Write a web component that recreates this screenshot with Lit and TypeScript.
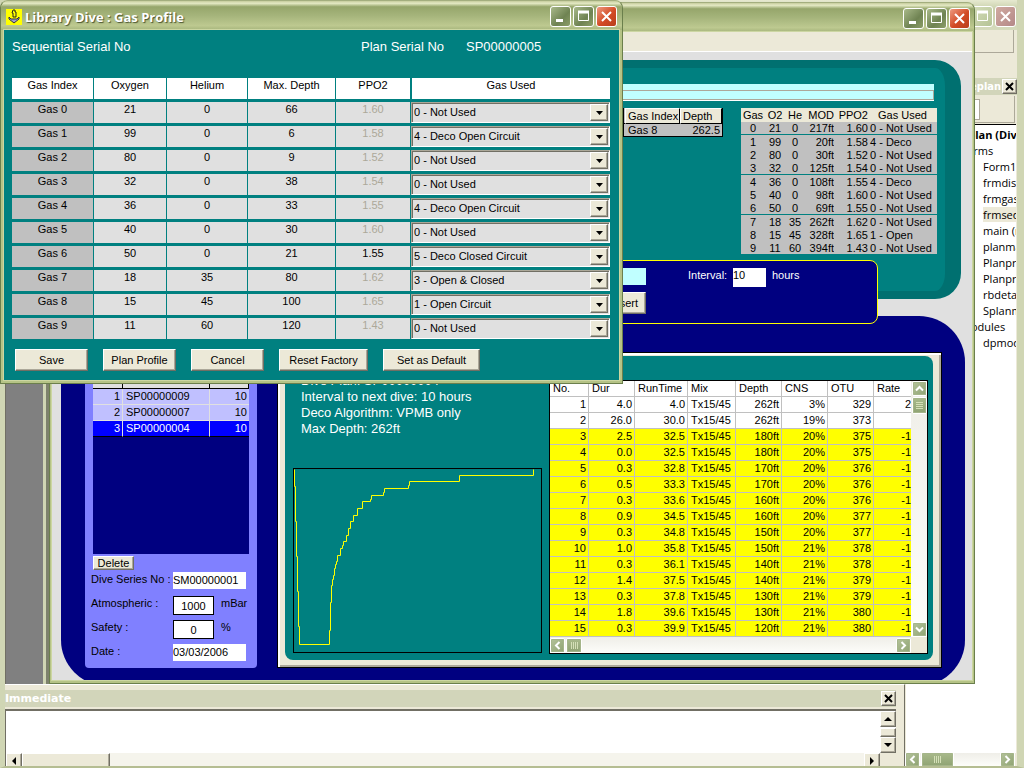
import { LitElement, html, css, svg } from "lit";
import { customElement, property } from "lit/decorators.js";

const USAGE = [
  "0 - Not Used",
  "1 - Open Circuit",
  "2 - Closed Circuit",
  "3 - Open & Closed",
  "4 - Deco Open Circuit",
  "5 - Deco Closed Circuit",
];

// oxygen, helium, max. depth, PPO2, usage index
const GASES: [number, number, number, string, number][] = [
  [21, 0, 66, "1.60", 0],
  [99, 0, 6, "1.58", 4],
  [80, 0, 9, "1.52", 0],
  [32, 0, 38, "1.54", 0],
  [36, 0, 33, "1.55", 4],
  [40, 0, 30, "1.60", 0],
  [50, 0, 21, "1.55", 5],
  [18, 35, 80, "1.62", 3],
  [15, 45, 100, "1.65", 1],
  [11, 60, 120, "1.43", 0],
];

const SUMMARY = [
  ["0", "21", "0", "217ft", "1.60", "0 - Not Used"],
  ["1", "99", "0", "20ft", "1.58", "4 - Deco"],
  ["2", "80", "0", "30ft", "1.52", "0 - Not Used"],
  ["3", "32", "0", "125ft", "1.54", "0 - Not Used"],
  ["4", "36", "0", "108ft", "1.55", "4 - Deco"],
  ["5", "40", "0", "98ft", "1.60", "0 - Not Used"],
  ["6", "50", "0", "69ft", "1.55", "0 - Not Used"],
  ["7", "18", "35", "262ft", "1.62", "0 - Not Used"],
  ["8", "15", "45", "328ft", "1.65", "1 - Open"],
  ["9", "11", "60", "394ft", "1.43", "0 - Not Used"],
];

const STEPS = [
  ["4.0", "4.0", "262ft", "3%", "329", "2"],
  ["26.0", "30.0", "262ft", "19%", "373", ""],
  ["2.5", "32.5", "180ft", "20%", "375", "-1"],
  ["0.0", "32.5", "180ft", "20%", "375", "-1"],
  ["0.3", "32.8", "170ft", "20%", "376", "-1"],
  ["0.5", "33.3", "170ft", "20%", "376", "-1"],
  ["0.3", "33.6", "160ft", "20%", "376", "-1"],
  ["0.9", "34.5", "160ft", "20%", "377", "-1"],
  ["0.3", "34.8", "150ft", "20%", "377", "-1"],
  ["1.0", "35.8", "150ft", "21%", "378", "-1"],
  ["0.3", "36.1", "140ft", "21%", "378", "-1"],
  ["1.4", "37.5", "140ft", "21%", "379", "-1"],
  ["0.3", "37.8", "130ft", "21%", "379", "-1"],
  ["1.8", "39.6", "130ft", "21%", "380", "-1"],
  ["0.3", "39.9", "120ft", "21%", "380", "-1"],
];

const FORMS = ["Form1", "frmdisp", "frmgas", "frmseq", "main (r", "planma", "Planpro", "Planpro", "rbdeta", "Splanm"];

const base = css`
  * {
    box-sizing: border-box;
  }
  button,
  input,
  select {
    font: inherit;
    color: inherit;
    margin: 0;
    padding: 0;
    border: 0;
    border-radius: 0;
    outline: none;
  }
  table {
    border-spacing: 0;
    table-layout: fixed;
  }
  th,
  td {
    padding: 0;
    font-weight: normal;
    text-align: center;
    white-space: nowrap;
    overflow: hidden;
  }
  .push {
    background: #ece9d8;
    color: #000;
    border: 1px solid;
    border-color: #fff #716f64 #716f64 #fff;
    box-shadow: inset -1px -1px 0 #aca899;
  }
`;

@customElement("window-controls")
export class WindowControls extends LitElement {
  @property({ type: Boolean }) faded = false;

  static styles = css`
    :host {
      display: flex;
      gap: 2px;
    }
    button {
      width: 21px;
      height: 21px;
      padding: 0;
      border: 1px solid #fff;
      border-radius: 3px;
      background: linear-gradient(135deg, #a9b98a, #6f8352 60%, #8c9e68);
      display: grid;
      place-items: center;
    }
    .close {
      background: linear-gradient(135deg, #ee9a80, #d24a24 55%, #b8401c);
    }
    .faded button {
      background: linear-gradient(135deg, #d3dcb8, #b5c396);
    }
    .faded .close {
      background: linear-gradient(135deg, #d0aaa0, #b48888);
    }
    .row {
      display: flex;
      gap: 2px;
    }
  `;

  render() {
    return html`<div class="row ${this.faded ? "faded" : ""}">
      <button aria-label="Minimize">
        <svg width="17" height="17"><path d="M4 12.500h7" stroke="#fff" stroke-width="3" /></svg>
      </button>
      <button aria-label="Maximize">
        <svg width="17" height="17" fill="none" stroke="#fff"><path d="M3.500 4.500h10v8h-10z" /><path d="M3 4h11" stroke-width="3" /></svg>
      </button>
      <button class="close" aria-label="Close">
        <svg width="17" height="17"><path d="M4 4l9 9M13 4l-9 9" stroke="#fff" stroke-width="2" /></svg>
      </button>
    </div>`;
  }
}

@customElement("scroll-strip")
export class ScrollStrip extends LitElement {
  @property() direction = "horizontal";

  static styles = css`
    :host {
      display: block;
      background: linear-gradient(#efeee8, #fdfdfa);
    }
    .strip {
      display: flex;
      height: 100%;
      gap: 1px;
      align-items: center;
    }
    .vertical {
      flex-direction: column;
    }
    button {
      width: 15px;
      height: 15px;
      padding: 0;
      flex: none;
      border: 1px solid #fff;
      outline: 1px solid #a5b58a;
      outline-offset: -2px;
      border-radius: 2px;
      background: linear-gradient(135deg, #b4c39a, #8fa373);
      display: grid;
      place-items: center;
    }
    .thumb {
      width: var(--thumb, 16px);
      background: linear-gradient(#a9ba8b, #8fa373);
    }
    .vertical .thumb {
      width: 15px;
      height: 17px;
    }
    .vertical .thumb svg {
      transform: rotate(90deg);
    }
    .gap {
      flex: 1;
    }
  `;

  render() {
    const v = this.direction === "vertical";
    const arrow = (d: string) => html`<svg width="11" height="11" fill="none" stroke="#fff" stroke-width="2"><path d=${d} /></svg>`;
    return html`<div class="strip ${this.direction}">
      <button aria-label="Back">${arrow(v ? "M2 7.500L5.500 4L9 7.500" : "M7.500 2L4 5.500L7.500 9")}</button>
      <button class="thumb" aria-label="Scroll">
        <svg width="9" height="9" stroke="#d5e0b8"><path d="M1.500 1v7M3.500 1v7M5.500 1v7M7.500 1v7" /></svg>
      </button>
      <span class="gap"></span>
      <button aria-label="Forward">${arrow(v ? "M2 3.500L5.500 7L9 3.500" : "M3.500 2L7 5.500L3.500 9")}</button>
    </div>`;
  }
}

@customElement("gas-dialog")
export class GasDialog extends LitElement {
  static styles = [
    base,
    css`
      :host {
        display: block;
        border: 1px solid #6b7f4c;
        border-top-color: #a3ae7e;
        border-radius: 8px 8px 0 0;
        background: #b5c386;
        overflow: hidden;
      }
      .title {
        display: flex;
        align-items: center;
        height: 29px;
        padding: 2px 5px 0 5px;
        background: linear-gradient(#c5cc9c 0, #e4e9c4 8%, #96a66b 20%, #a5b47b 50%, #bdc990 85%, #a5b47b 100%);
        color: #fff;
        text-shadow: 1px 1px 1px #4a5530;
      }
      .title h1 {
        flex: 1;
        margin: 0 0 0 3px;
        font: bold 13px "Open Sans", "Noto Sans", sans-serif;
      }
      .client {
        margin: 0 3px 3px;
        outline: 1px solid #ccd6a2;
        background: #008080;
        padding: 9px 9px 9px 8px;
      }
      .serials {
        display: grid;
        grid-template-columns: 349px 105px auto;
        line-height: 16px;
        font-size: 13px;
        color: #fff;
        margin-bottom: 20px;
      }
      table {
        border-spacing: 1px 3px;
        margin: 0 -1px;
      }
      th {
        height: 21px;
        background: #fff;
        line-height: 15px;
        vertical-align: top;
      }
      .last {
        border-left: 1px solid #008080;
      }
      td {
        height: 21px;
        background: #e0e0e0;
        line-height: 15px;
        vertical-align: top;
      }
      td.index {
        background: #c0c0c0;
      }
      td.dim {
        color: #aca899;
      }
      .combo {
        display: grid;
        grid-template-columns: 1fr 19px;
        height: 21px;
        border: 1px solid;
        border-color: #aca899 #fff #fff #aca899;
        box-shadow: inset 1px 1px 0 #716f64;
      }
      select {
        appearance: none;
        grid-area: 1 / 1 / 2 / 3;
        background: none;
        padding-left: 2px;
      }
      .arrow {
        grid-area: 1 / 2 / 2 / 3;
        pointer-events: none;
        margin: 1px 1px 1px 0;
        display: grid;
        place-items: center;
      }
      .actions {
        display: flex;
        gap: 15px;
        padding: 7px 3px 0;
      }
      .actions button {
        width: 73px;
        height: 22px;
      }
      .actions .wide {
        width: 89px;
      }
      .actions .wider {
        width: 97px;
      }
    `,
  ];

  render() {
    return html`
      <header class="title">
        <svg width="16" height="16">
          <rect width="16" height="16" fill="#ff0" />
          <path d="M7 1h2v2h1v5H7V4H6z" fill="#ff0" stroke="#222" />
          <path d="M3 8l2 2h6l2-2v2l-5 4-5-4z" fill="#a0a0c8" stroke="#334" />
        </svg>
        <h1>Library Dive : Gas Profile</h1>
        <window-controls></window-controls>
      </header>
      <div class="client">
        <div class="serials"><span>Sequential Serial No</span><span>Plan Serial No</span><span>SP00000005</span></div>
        <table>
          <colgroup>
            <col style="width:81px" /><col style="width:72px" /><col style="width:80px" />
            <col style="width:87px" /><col style="width:74px" /><col style="width:199px" />
          </colgroup>
          <thead>
            <tr><th>Gas Index</th><th>Oxygen</th><th>Helium</th><th>Max. Depth</th><th>PPO2</th><th class="last">Gas Used</th></tr>
          </thead>
          <tbody>
            ${GASES.map(
              ([o2, he, depth, ppo2, use], i) => html`<tr>
                <td class="index">Gas ${i}</td>
                <td>${o2}</td>
                <td>${he}</td>
                <td>${depth}</td>
                <td class=${use === 5 ? "" : "dim"}>${ppo2}</td>
                <td>
                  <div class="combo">
                    <select aria-label="Gas ${i} used">
                      ${USAGE.map((u, n) => html`<option ?selected=${n === use}>${u}</option>`)}
                    </select>
                    <span class="arrow push"><svg width="7" height="4"><path d="M0 0h7L3.500 4z" /></svg></span>
                  </div>
                </td>
              </tr>`
            )}
          </tbody>
        </table>
        <div class="actions">
          <button class="push">Save</button>
          <button class="push">Plan Profile</button>
          <button class="push">Cancel</button>
          <button class="push wide">Reset Factory</button>
          <button class="push wider">Set as Default</button>
        </div>
      </div>
    `;
  }
}

@customElement("planner-form")
export class PlannerForm extends LitElement {
  static styles = [
    base,
    css`
      :host {
        display: flex;
        flex-direction: column;
        border: 1px solid #6b7f4c;
        border-top-color: #a3ae7e;
        border-radius: 8px 8px 0 0;
        background: #b5c386;
        overflow: hidden;
        isolation: isolate;
      }
      .title {
        display: flex;
        flex: none;
        justify-content: flex-end;
        align-items: center;
        height: 29px;
        padding: 2px 4px 0;
        background: linear-gradient(#c5cc9c 0, #e4e9c4 8%, #96a66b 20%, #a5b47b 50%, #bdc990 85%, #a5b47b 100%);
      }
      .client {
        flex: 1;
        min-height: 0;
        margin: 0 2px 3px;
        outline: 1px solid #ccd6a2;
        background: #e0e0e0;
        overflow: hidden;
        display: flex;
        flex-direction: column;
      }
      .menu {
        flex: none;
        height: 20px;
        background: #ece9d8;
        border-bottom: 1px solid #fff;
      }
      .gases {
        flex: none;
        margin: 8px 11px 0 9px;
        border: 8px solid #007070;
        border-right-width: 16px;
        border-radius: 26px;
        background: #008080;
        padding: 16px 8px 37px;
      }
      .note {
        margin-right: 3px;
        padding: 6px 0 1px;
        background: #c0ffff;
        margin-bottom: 7px;
      }
      .note input {
        display: block;
        width: 100%;
        height: 10px;
        background: #c0ffff;
        border: 1px solid #aca899;
        box-shadow: 0 1px 0 #fff;
      }
      .tables {
        display: flex;
        justify-content: flex-end;
        align-items: flex-start;
        gap: 18px;
      }
      .mini {
        width: 100px;
        background: #c0c0c0;
        border-right: 1px solid #000;
        border-left: 1px solid #000;
      }
      .mini th {
        height: 16px;
        background: #ece9d8;
        border: 1px solid;
        border-color: #fff #000 #000 #fff;
        text-align: left;
        padding-left: 2px;
      }
      .mini td {
        height: 13px;
        border-bottom: 1px solid #000;
        text-align: left;
        padding: 0 2px 0 3px;
        line-height: 12px;
      }
      .mini .num {
        text-align: right;
      }
      .summary {
        width: 196px;
        background: #c0c0c0;
        line-height: 12px;
      }
      .summary th {
        height: 14px;
        background: #ece9d8;
      }
      .summary td {
        height: 13px;
      }
      .summary .rule td {
        height: 14px;
        border-bottom: 1px solid #008080;
      }
      .summary .rule.first td {
        height: 13px;
      }
      .summary .num {
        text-align: right;
      }
      .summary td.use {
        text-align: left;
        padding-left: 2px;
      }
      .insert {
        margin: -39px 94px 0 9px;
        height: 64px;
        z-index: 1;
        flex: none;
        border: 1px solid #ff0;
        border-radius: 8px;
        background: #000080;
        color: #fff;
        padding-top: 7px;
        display: grid;
        grid-template-columns: 60px 42px 45px 33px 6px 105px;
        grid-template-rows: 19px 22px;
        row-gap: 5px;
        justify-content: end;
        line-height: 14px;
      }
      .insert input {
        background: #fff;
        color: #000;
        width: 100%;
        height: 19px;
        padding-bottom: 5px;
      }
      .insert input.name {
        background: #c0ffff;
        height: 17px;
        grid-column: 1;
      }
      .insert label {
        grid-column: 3;
      }
      .insert .unit {
        grid-column: 6;
      }
      .insert button {
        grid-column: 1;
        text-align: right;
        padding-right: 7px;
      }
      .plan-area {
        flex: 1;
        min-height: 0;
        margin: -8px 7px -6px 9px;
        border-radius: 46px;
        background: #000080;
        padding: 36px 23px 18px 24px;
        display: flex;
        gap: 20px;
      }
      .series {
        width: 172px;
        flex: none;
        background: #8080ff;
        border-radius: 4px;
        padding: 20px 8px 8px;
        display: flex;
        flex-direction: column;
      }
      .list {
        flex: 1;
        background: #000080;
      }
      .list table {
        width: 100%;
      }
      .list th {
        height: 17px;
        background: #e0e0e0;
        border: solid #000;
        border-width: 0 1px 1px 0;
      }
      .list td {
        height: 16px;
        background: #c0c0ff;
        border: solid #e0e0e0;
        border-width: 0 1px 1px 0;
        text-align: right;
        padding-right: 2px;
      }
      .list td + td {
        text-align: left;
        padding-left: 3px;
      }
      .list td.amount {
        text-align: right;
        border-right: 0;
      }
      .list .chosen td {
        background: #00f;
        color: #fff;
        border-bottom-color: #000;
      }
      .delete {
        width: 41px;
        height: 14px;
        line-height: 11px;
        margin: 2px 0;
      }
      .fields {
        display: grid;
        grid-template-columns: 82px 41px 32px;
        grid-auto-rows: 19px;
        row-gap: 5px;
        margin: 0 -3px -3px -2px;
        line-height: 14px;
      }
      .fields input {
        background: #fff;
        width: 73px;
        height: 17px;
        padding-bottom: 2px;
        grid-column: 2 / 4;
      }
      .fields input.boxed {
        width: 41px;
        height: 19px;
        padding: 0;
        border: 1px solid #000;
        text-align: center;
        grid-column: 2;
      }
      .fields span {
        padding-left: 7px;
      }
      .frame {
        flex: 1;
        min-width: 0;
        border: 1px solid #000;
        background: #ece9d8;
        box-shadow: inset 2px 2px 0 #fff, inset -2px -2px 0 #aca899;
        padding: 3px 8px 8px 7px;
        display: grid;
      }
      .plan {
        background: #008080;
        border-radius: 8px;
        padding: 17px 5px 6px 8px;
        display: flex;
        gap: 7px;
        min-width: 0;
      }
      .facts {
        display: flex;
        flex-direction: column;
        justify-content: space-between;
        flex: 1;
        padding-bottom: 1px;
      }
      .facts svg {
        display: block;
      }
      .facts p {
        margin: 0 0 0 8px;
        font-size: 13px;
        line-height: 16px;
        color: #fff;
      }
      .sheet {
        margin-top: 7px;
        border: 1px solid #000;
        background: #fff;
        display: grid;
        grid-template-columns: 361px 16px;
        grid-template-rows: 1fr 16px;
        align-self: flex-start;
      }
      .sheet table {
        width: 361px;
        line-height: 15px;
      }
      .sheet th,
      .sheet td {
        height: 16px;
        border: solid #c0c0c0;
        border-width: 0 1px 1px 0;
        text-align: right;
        padding-right: 2px;
      }
      .sheet th,
      .sheet td.mix {
        text-align: left;
        padding: 0 0 0 3px;
      }
      .sheet tr > :last-child {
        border-right: 0;
        padding-right: 0;
      }
      .sheet .deco {
        background: #ff0;
      }
      .corner {
        background: #ece9d8;
      }
    `,
  ];

  private chart() {
    return html`<svg width="249" height="185" viewBox="-0.5 -0.5 249 185" fill="none" stroke-width="1">
      ${svg`<rect width="248" height="184" stroke="#000000"/>
      <path stroke="#ffff00" d="M1 1V18H2V53H3V88H4V123H5V158H6V176H36V162H37V134H38V117H39V111H40V107H41V100H42V96H43V93H44V87H47V80H49V77H50V73H53V67H55V60H57V53H60V47H64V40H69V33H77V31H78V27H90V24H91V20H115V17H116V13H166V7H240V1"/>`}
    </svg>`;
  }

  render() {
    return html`
      <header class="title"><window-controls></window-controls></header>
      <div class="client">
        <nav class="menu"></nav>
        <section class="gases">
          <div class="note"><input aria-label="Note" /></div>
          <div class="tables">
            <table class="mini">
              <colgroup><col style="width:1px" /><col style="width:55px" /><col style="width:42px" /></colgroup>
              <tr><td></td><th>Gas Index</th><th>Depth</th></tr>
              <tr><td></td><td>Gas 8</td><td class="num">262.5</td></tr>
            </table>
            <table class="summary">
              <colgroup>
                <col style="width:24px" /><col style="width:20px" /><col style="width:20px" />
                <col style="width:29px" /><col style="width:34px" /><col style="width:69px" />
              </colgroup>
              <tr><th>Gas</th><th>O2</th><th>He</th><th class="num">MOD</th><th class="num">PPO2</th><th>Gas Used</th></tr>
              ${SUMMARY.map(
                (r, i) => html`<tr class="${i % 3 === 0 && i < 9 ? "rule" : ""} ${i === 0 ? "first" : ""}">
                  <td>${r[0]}</td><td>${r[1]}</td><td>${r[2]}</td>
                  <td class="num">${r[3]}</td><td class="num">${r[4]}</td><td class="use">${r[5]}</td>
                </tr>`
              )}
            </table>
          </div>
        </section>
        <section class="insert">
          <input class="name" aria-label="Plan" />
          <label for="interval">Interval:</label>
          <input id="interval" value="10" />
          <span class="unit">hours</span>
          <button class="push">Insert</button>
        </section>
        <section class="plan-area">
          <div class="series">
            <div class="list">
              <table>
                <colgroup><col style="width:30px" /><col style="width:87px" /><col style="width:39px" /></colgroup>
                <tr><th></th><th></th><th></th></tr>
                <tr><td>1</td><td>SP00000009</td><td class="amount">10</td></tr>
                <tr><td>2</td><td>SP00000007</td><td class="amount">10</td></tr>
                <tr class="chosen"><td>3</td><td>SP00000004</td><td class="amount">10</td></tr>
              </table>
            </div>
            <button class="push delete">Delete</button>
            <div class="fields">
              <label for="no">Dive Series No :</label><input id="no" value="SM00000001" />
              <label for="atm">Atmospheric :</label><input id="atm" class="boxed" value="1000" /><span>mBar</span>
              <label for="safe">Safety :</label><input id="safe" class="boxed" value="0" /><span>%</span>
              <label for="date">Date :</label><input id="date" value="03/03/2006" />
            </div>
          </div>
          <div class="frame">
            <div class="plan">
              <div class="facts">
                <div>
                  <p>Dive Plan: SP00000004</p>
                  <p>Interval to next dive: 10 hours</p>
                  <p>Deco Algorithm: VPMB only</p>
                  <p>Max Depth: 262ft</p>
                </div>
                ${this.chart()}
              </div>
              <div class="sheet">
                <table>
                  <colgroup>
                    <col style="width:39px" /><col style="width:46px" /><col style="width:53px" /><col style="width:48px" />
                    <col style="width:46px" /><col style="width:46px" /><col style="width:46px" /><col style="width:37px" />
                  </colgroup>
                  <tr><th>No.</th><th>Dur</th><th>RunTime</th><th>Mix</th><th>Depth</th><th>CNS</th><th>OTU</th><th>Rate</th></tr>
                  ${STEPS.map(
                    (s, i) => html`<tr class=${i > 1 ? "deco" : ""}>
                      <td>${i + 1}</td><td>${s[0]}</td><td>${s[1]}</td><td class="mix">Tx15/45</td>
                      <td>${s[2]}</td><td>${s[3]}</td><td>${s[4]}</td><td>${s[5]}</td>
                    </tr>`
                  )}
                </table>
                <scroll-strip direction="vertical"></scroll-strip>
                <scroll-strip></scroll-strip>
                <span class="corner"></span>
              </div>
            </div>
          </div>
        </section>
      </div>
    `;
  }
}

@customElement("app-root")
export class AppRoot extends LitElement {
  static styles = [
    base,
    css`
      :host {
        display: block;
        position: relative;
        height: 100vh;
        overflow: hidden;
        font: 11px/13px "Liberation Sans", Arial, sans-serif;
        color: #000;
      }
      planner-form {
        position: absolute;
        left: 49px;
        right: 49px;
        top: 2px;
        bottom: 84px;
      }
      gas-dialog {
        position: absolute;
        left: 0;
        top: 0;
        z-index: 2;
      }
      .ide {
        height: 100%;
        display: flex;
        flex-direction: column;
        background: #ece9d8;
        border: solid #d0d6b4;
        border-width: 0 7px 2px 5px;
        border-bottom-color: #b5bd92;
      }
      .title {
        height: 30px;
        flex: none;
        display: flex;
        justify-content: flex-end;
        align-items: center;
        padding: 3px 1px 0 0;
        background: linear-gradient(#e6e9d0, #c9d0ab 30%, #d5dabc);
      }
      .tools {
        height: 23px;
        flex: none;
        border: solid #aca899;
        border-width: 0 1px 1px 0;
        margin-right: 3px;
      }
      .body {
        flex: 1;
        min-height: 0;
        display: flex;
        margin-top: 25px;
      }
      .left {
        flex: 1;
        min-width: 0;
        display: flex;
        flex-direction: column;
      }
      .mdi {
        flex: 1;
        background: #808080;
        border-left: 1px solid #716f64;
        display: flex;
      }
      .child {
        flex: 1;
        margin-left: 37px;
        border-left: 6px ridge #d0d6b4;
      }
      .immediate {
        flex: none;
        height: 82px;
        border-top: 1px solid #fff;
        padding: 5px 8px 0 0;
        display: flex;
        flex-direction: column;
        border-right: 1px solid #716f64;
      }
      .caption {
        display: flex;
        flex: none;
        align-items: center;
        height: 17px;
        background: #d2d5ba;
        color: #fff;
        font: bold 11px "DejaVu Sans", sans-serif;
      }
      .caption span {
        flex: 1;
        min-width: 0;
      }
      .caption button {
        width: 15px;
        height: 15px;
        display: grid;
        place-items: center;
      }
      .editor {
        flex: 1;
        margin-top: 2px;
        background: #fff;
        border: solid #716f64;
        border-width: 2px 0 0 1px;
        display: grid;
        grid-template-columns: 1fr 16px;
        grid-template-rows: 1fr 13px;
      }
      .editor .side {
        display: flex;
        flex-direction: column;
        justify-content: space-between;
      }
      .editor .push {
        width: 16px;
        height: 16px;
        display: grid;
        place-items: center;
      }
      .editor .grip {
        height: 9px;
      }
      .bottom {
        display: flex;
        background: #f5f4ec;
        overflow: hidden;
      }
      .editor .bottom .bar {
        width: 88px;
        margin-right: auto;
      }
      .cap {
        background: #ece9d8;
      }
      .project {
        width: 112px;
        flex: none;
        display: flex;
        flex-direction: column;
      }
      .project .caption span {
        font-family: "DejaVu Sans Condensed", "DejaVu Sans", sans-serif;
        text-align: right;
        padding-right: 1px;
      }
      .views {
        flex: none;
        height: 27px;
        border: solid #aca899;
        border-width: 0 1px 1px 0;
        margin: 1px 2px 1px 0;
        display: flex;
        justify-content: flex-end;
        align-items: center;
        padding-right: 34px;
      }
      .views i {
        width: 10px;
        height: 21px;
        background: #fff;
        border: 1px solid #aca899;
      }
      .tree {
        flex: 1;
        margin: 0 1px;
        padding-top: 2px;
        overflow: hidden;
        background: #fff;
        border-top: 1px solid #000;
        font: 11px/16px "Open Sans", "Noto Sans", sans-serif;
        white-space: nowrap;
      }
      .tree div {
        padding-left: 77px;
      }
      .tree .group {
        padding-left: 55px;
      }
      .tree .root {
        padding-left: 38px;
        font-weight: bold;
      }
      .tree .on {
        background: #ece9d8;
      }
      .project scroll-strip {
        height: 13px;
        overflow: hidden;
        margin-right: 2px;
        --thumb: 33px;
      }
    `,
  ];

  private cross() {
    return html`<svg width="9" height="9"><path d="M1 1l7 7M8 1L1 8" stroke="#000" stroke-width="2" /></svg>`;
  }

  private arrow(d: string) {
    return html`<svg width="8" height="8"><path d=${d} /></svg>`;
  }

  render() {
    return html`
      <main class="ide">
        <header class="title"><window-controls faded></window-controls></header>
        <div class="tools"></div>
        <div class="body">
          <div class="left">
            <div class="mdi"><div class="child"></div></div>
            <section class="immediate">
              <div class="caption"><span>Immediate</span><button class="push" aria-label="Close">${this.cross()}</button></div>
              <div class="editor">
                <div></div>
                <div class="side">
                  <button class="push" aria-label="Up">${this.arrow("M0 6h8L4 2z")}</button>
                  <button class="push grip" aria-label="Scroll"></button>
                  <button class="push" aria-label="Down">${this.arrow("M0 2h8L4 6z")}</button>
                </div>
                <div class="bottom">
                  <button class="push" aria-label="Left">${this.arrow("M6 0v8L2 4z")}</button>
                  <button class="push bar" aria-label="Scroll"></button>
                  <button class="push" aria-label="Right">${this.arrow("M2 0v8L6 4z")}</button>
                </div>
                <div class="cap"></div>
              </div>
            </section>
          </div>
          <aside class="project">
            <div class="caption"><span>Diveplan</span><button class="push" aria-label="Close">${this.cross()}</button></div>
            <div class="views"><i></i></div>
            <div class="tree">
              <div class="root">Diveplan (Div</div>
              <div class="group">Forms</div>
              ${FORMS.map((f) => html`<div><span class=${f === "frmseq" ? "on" : ""}>${f}</span></div>`)}
              <div class="group">Modules</div>
              <div>dpmod</div>
            </div>
            <scroll-strip></scroll-strip>
          </aside>
        </div>
      </main>
      <planner-form></planner-form>
      <gas-dialog></gas-dialog>
    `;
  }
}
